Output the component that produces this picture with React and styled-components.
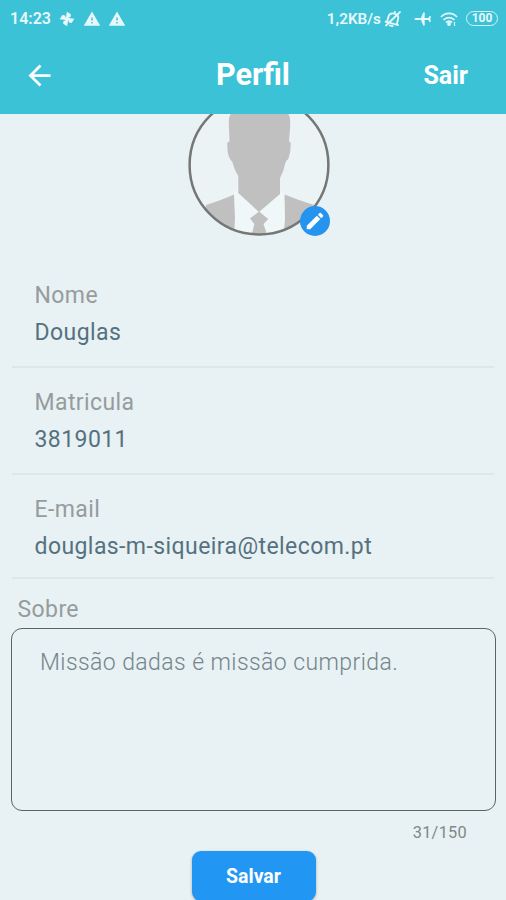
import React, {Component} from 'react';
import styled, {createGlobalStyle} from 'styled-components';
import {MdArrowBack, MdEdit, MdWarning} from 'react-icons/md';

const GlobalStyle = createGlobalStyle`
    * {
        box-sizing: border-box;
    }

    body {
        margin: 0;
        background: #e8f1f3;
        font-family: Roboto, "Liberation Sans", sans-serif;
    }
`;

const Container = styled.div`
    display: flex;
    flex-direction: column;
    height: 100vh;
    overflow: hidden;
    background: #e8f1f3;
`;

const Header = styled.header`
    flex: none;
    height: 114px;
    color: #ffffff;
    background: #3cc2d7;
`;

const StatusBar = styled.div`
    display: flex;
    justify-content: space-between;
    align-items: center;
    height: 37px;
    padding: 0 8px 0 10px;
    color: #e6f8fb;
`;

const StatusGroup = styled.div`
    display: flex;
    align-items: center;
`;

const StatusText = styled.span`
    font-size: ${props => props.$size}px;
    font-weight: 600;
    line-height: 20px;
`;

const StatusIcon = styled.span`
    display: flex;
    margin-left: ${props => props.$gap}px;
`;

const Battery = styled.span`
    width: 32px;
    height: 15px;
    margin-left: 8px;
    border: 1.5px solid #d5f2f7;
    border-radius: 8px;
    font-size: 12px;
    font-weight: 700;
    line-height: 13px;
    text-align: center;
`;

const NavBar = styled.nav`
    display: grid;
    grid-template-columns: 1fr auto 1fr;
    align-items: center;
    height: 77px;
    padding: 0 38px 0 23px;
`;

const BackButton = styled.button`
    display: flex;
    justify-self: start;
    padding: 0;
    border: none;
    color: #ffffff;
    background: none;
`;

const Title = styled.h1`
    margin: 0 0 1px 15px;
    font-size: 30.5px;
    font-weight: 700;
    line-height: 36px;
`;

const LogoutButton = styled.button`
    justify-self: end;
    padding: 0;
    border: none;
    color: #ffffff;
    background: none;
    font-family: inherit;
    font-size: 25px;
    font-weight: 700;
    line-height: 30px;
`;

const Content = styled.main`
    display: flex;
    flex-direction: column;
    flex: 1;
    min-height: 0;
    padding: 0 10px 0 11px;
    overflow: hidden;
`;

const Avatar = styled.div`
    position: relative;
    flex: none;
    align-self: center;
    width: 142px;
    height: 142px;
    margin: -20px 0 25px 11px;
`;

const EditBadge = styled.button`
    position: absolute;
    right: 0;
    bottom: 0;
    display: flex;
    align-items: center;
    justify-content: center;
    width: 30px;
    height: 30px;
    padding: 0;
    border: none;
    border-radius: 50%;
    color: #ffffff;
    background: #2494ef;
`;

const Field = styled.div`
    flex: none;
    height: ${props => props.$height}px;
    margin: 0 2px 0 1px;
    padding: 20px 22.5px 0;
    border-bottom: 2px solid #dde6e8;
`;

const Label = styled.label`
    display: block;
    color: #969c9d;
    font-size: 23px;
    line-height: 30px;
    letter-spacing: 0.4px;
`;

const Value = styled.div`
    margin-top: 7px;
    color: #557180;
    font-size: 23px;
    line-height: 30px;
    letter-spacing: 0.42px;
`;

const AboutLabel = styled(Label)`
    margin: 16px 0 3px 6.5px;
`;

const AboutInput = styled.textarea`
    flex: none;
    width: 100%;
    height: 183px;
    padding: 19px 28px;
    border: 1.5px solid #5b6365;
    border-radius: 11px;
    outline: none;
    resize: none;
    color: #74858b;
    background: transparent;
    font-family: inherit;
    font-size: 23px;
    font-weight: 300;
    line-height: 30px;
    letter-spacing: 0.42px;
`;

const Counter = styled.span`
    align-self: flex-end;
    margin: 12px 29px 9px 0;
    color: #80888a;
    font-size: 16.3px;
    line-height: 19px;
    letter-spacing: 0.3px;
`;

const SaveButton = styled.button`
    flex: none;
    align-self: center;
    width: 124px;
    height: 50px;
    padding: 0;
    border: none;
    border-radius: 9px;
    color: #ffffff;
    background: #2196f3;
    box-shadow: 0 1px 3px rgba(0, 0, 0, 0.3);
    font-family: inherit;
    font-size: 19.5px;
    font-weight: 700;
`;

const FanIcon = () => (
    <svg width="16" height="16" viewBox="0 0 16 16" fill="currentColor">
        {[0, 90, 180, 270].map(angle => (
            <path key={angle} d="M6.8 8.5V.8L11.2 2.8V5.6L8.8 6.8V8.5Z" transform={`rotate(${angle + 8} 8 8)`}/>
        ))}
    </svg>
);

const MutedBellIcon = () => (
    <svg width="18" height="18" viewBox="0 0 18 18" fill="none" stroke="currentColor" strokeWidth="1.8"
         strokeLinecap="round">
        <g transform="rotate(15 9 9)">
            <path d="M4 13V8C4 5 6 3.5 9 3.5S14 5 14 8V13M2.5 13.5H15.5M7.5 16H10.5M9 1.5V3.5"/>
        </g>
        <path d="M2 15.5L16 2"/>
    </svg>
);

const PlaneIcon = () => (
    <svg width="18" height="18" viewBox="0 0 18 18" fill="currentColor">
        <path d="M.2 9Q.6 8.1 2.5 8H7L9.2 2.4H10.8L10.6 8H14.4L15.6 6H16.8L16.4 9L16.8 12H15.6L14.4 10H10.6L10.8 15.6H9.2L7 10H2.5Q.6 9.9 .2 9Z"/>
    </svg>
);

const WifiIcon = () => (
    <svg width="18" height="16" viewBox="0 0 18 16" fill="none" stroke="currentColor" strokeWidth="1.8">
        <path d="M1 6C5.5 1.2 12.5 1.2 17 6M3.5 9C6.5 5.8 11.5 5.8 14.5 9M6 11.5C7.8 9.7 10.2 9.7 12 11.5"/>
        <circle cx="9" cy="13" r="1" fill="currentColor"/>
        <path d="M14.5 11V15" strokeWidth="1.2"/>
    </svg>
);

const Portrait = () => (
    <svg width="142" height="142" viewBox="0 0 142 142">
        <defs>
            <clipPath id="portrait">
                <circle cx="71" cy="71" r="69"/>
            </clipPath>
        </defs>
        <circle cx="71" cy="71" r="69" fill="#ebf3f5"/>
        <g clipPath="url(#portrait)">
            <path fill="#f0f7f8" d="M46 98L51 96L72 117L92 96L97 100V142H46Z"/>
            <g fill="#c0c0c0">
                <path d="M44 19Q40 21 41 34L41.5 48Q39 47 39.3 52Q39.5 62 42.7 66Q44.5 67 45.3 71Q47 77 50.3 82V99L71 118L92 100V84Q96 77 97 70Q98 66 100.3 65Q103 58 102.7 50Q102.5 47 101 48L102 34Q103 21 99 19Z"/>
                <path d="M46 100.5Q34 106 18 111V142H46L47 125Z"/>
                <path d="M96.5 100.5Q110 106 126 111V142H95.5L97 125Z"/>
                <path d="M71 117.5L62 124.5L66.3 130L63.5 142H79.5L75.5 130L80.3 125Z"/>
            </g>
        </g>
        <circle cx="71" cy="71" r="69.4" fill="none" stroke="#747776" strokeWidth="2.5"/>
    </svg>
);

class App extends Component {
    state = {
        about: 'Missão dadas é missão cumprida.',
        maxLength: 150
    };

    fields = [
        {label: 'Nome', value: 'Douglas', height: 107},
        {label: 'Matricula', value: '3819011', height: 107},
        {label: 'E-mail', value: 'douglas-m-siqueira@telecom.pt', height: 104}
    ];

    changeAboutHandler = (event) => {
        this.setState({about: event.target.value});
    };

    render() {
        const {about, maxLength} = this.state;

        return (
            <Container>
                <GlobalStyle/>
                <Header>
                    <StatusBar>
                        <StatusGroup>
                            <StatusText $size={16}>14:23</StatusText>
                            <StatusIcon $gap={8}><FanIcon/></StatusIcon>
                            <StatusIcon $gap={8}><MdWarning size={18}/></StatusIcon>
                            <StatusIcon $gap={7}><MdWarning size={18}/></StatusIcon>
                        </StatusGroup>
                        <StatusGroup>
                            <StatusText $size={15.3}>1,2KB/s</StatusText>
                            <StatusIcon $gap={3}><MutedBellIcon/></StatusIcon>
                            <StatusIcon $gap={12}><PlaneIcon/></StatusIcon>
                            <StatusIcon $gap={8}><WifiIcon/></StatusIcon>
                            <Battery>100</Battery>
                        </StatusGroup>
                    </StatusBar>
                    <NavBar>
                        <BackButton aria-label="Voltar"><MdArrowBack size={33}/></BackButton>
                        <Title>Perfil</Title>
                        <LogoutButton>Sair</LogoutButton>
                    </NavBar>
                </Header>
                <Content>
                    <Avatar>
                        <Portrait/>
                        <EditBadge aria-label="Editar"><MdEdit size={22}/></EditBadge>
                    </Avatar>
                    {this.fields.map(field => (
                        <Field key={field.label} $height={field.height}>
                            <Label>{field.label}</Label>
                            <Value>{field.value}</Value>
                        </Field>
                    ))}
                    <AboutLabel>Sobre</AboutLabel>
                    <AboutInput value={about} maxLength={maxLength} onChange={this.changeAboutHandler}/>
                    <Counter>{about.length}/{maxLength}</Counter>
                    <SaveButton>Salvar</SaveButton>
                </Content>
            </Container>
        );
    }
}

export default App;
